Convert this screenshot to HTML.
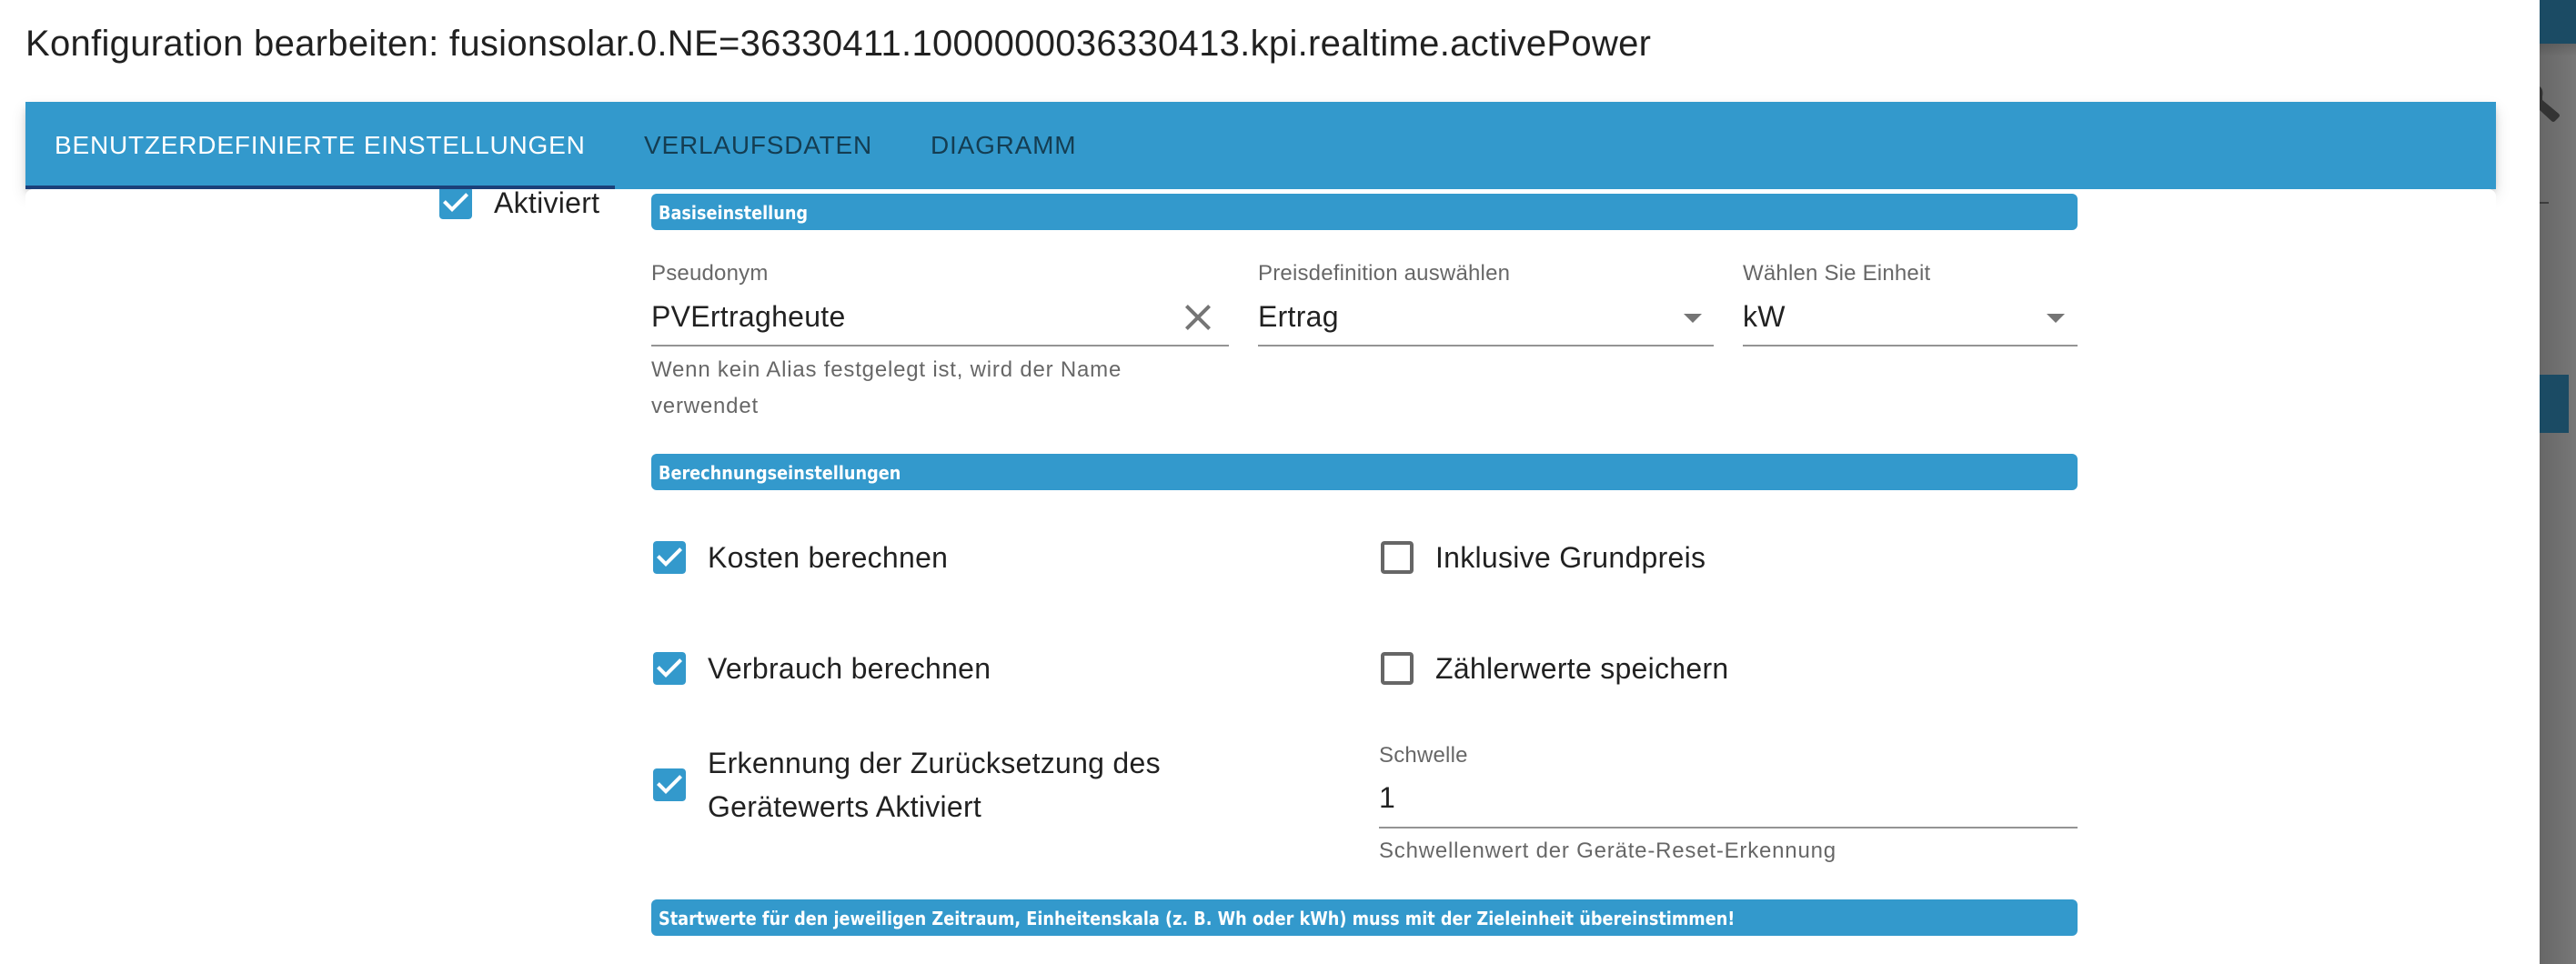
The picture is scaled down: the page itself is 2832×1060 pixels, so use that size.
<!DOCTYPE html>
<html lang="de">
<head>
<meta charset="utf-8">
<title>Konfiguration bearbeiten</title>
<style>
html,body{margin:0;padding:0;background:#fff;width:2832px;height:1060px;overflow:hidden}
body{position:relative;font-family:"Liberation Sans",Arial,sans-serif;color:rgba(0,0,0,.87)}
.t{position:absolute;line-height:1;white-space:nowrap}
.title{font-size:40px;letter-spacing:.3px}
.tab{font-size:28px;letter-spacing:.8px;color:rgba(0,0,0,.6)}
.lbl{font-size:24px;letter-spacing:.2px;color:rgba(0,0,0,.6)}
.help{font-size:24px;letter-spacing:.8px;color:rgba(0,0,0,.6)}
.val{font-size:32px;letter-spacing:.28px}
.line{position:absolute;height:2px;background:#949494}
.sec{position:absolute;left:716px;width:1568px;height:40px;background:#3399cc;border-radius:6px}
.sec span{position:absolute;left:8px;font:bold 20px/1 "DejaVu Sans",Verdana,sans-serif;color:#fff;white-space:nowrap;transform:scaleX(.884);transform-origin:0 0}
svg{position:absolute;display:block}
#strip{position:absolute;left:2792px;top:0;width:40px;height:1060px;overflow:hidden;background:linear-gradient(90deg,#676767,#777)}
#shadow{position:absolute;left:28px;top:112px;width:2716px;height:96px;z-index:1;box-shadow:0 4px 8px -2px rgba(0,0,0,.2),0 8px 16px 0 rgba(0,0,0,.12)}
#bar{position:absolute;left:28px;top:112px;width:2716px;height:96px;background:#3399cc;z-index:3}
#panel{position:absolute;left:28px;top:208px;width:2716px;height:852px;background:#fff;border-radius:8px 8px 0 0;z-index:2}
#ind{position:absolute;left:0;top:92px;width:648px;height:4px;background:#1b4079}
#content{position:absolute;left:0;top:0;width:2832px;height:1060px;z-index:2}
</style>
</head>
<body>

<div id="strip">
  <div style="position:absolute;left:0;top:0;width:40px;height:48px;background:#1b4b64"></div>
  <div style="position:absolute;left:0;top:48px;width:40px;height:14px;background:linear-gradient(180deg,rgba(0,0,0,.14),rgba(0,0,0,0))"></div>
  <svg style="left:0;top:0" width="40" height="240" viewBox="2792 0 40 240">
    <path fill="#333" d="M2792 95C2795 97 2796 101 2795 106V110L2813 125Q2815 127 2813 129L2809 133Q2807 135 2805 133L2792 121Z"/>
    <rect x="2792" y="222" width="10" height="2" fill="#3c3c3c"/>
  </svg>
  <div style="position:absolute;left:0;top:412px;width:32px;height:64px;background:#1b4b64"></div>
</div>

<div class="t title" style="left:28px;top:28px">Konfiguration bearbeiten: fusionsolar.0.NE=36330411.1000000036330413.kpi.realtime.activePower</div>

<div id="shadow"></div>
<div id="bar">
  <div id="ind"></div>
  <div class="t tab" style="left:32px;top:34px;color:#fff">BENUTZERDEFINIERTE EINSTELLUNGEN</div>
  <div class="t tab" style="left:680px;top:34px">VERLAUFSDATEN</div>
  <div class="t tab" style="left:995px;top:34px">DIAGRAMM</div>
</div>

<div id="panel"></div>

<div id="content">
  <svg style="left:477px;top:199px" width="48" height="48" viewBox="0 0 24 24"><path fill="#3399cc" d="M19 3H5c-1.11 0-2 .9-2 2v14c0 1.1.89 2 2 2h14c1.11 0 2-.9 2-2V5c0-1.1-.89-2-2-2zm-9 14l-5-5 1.41-1.41L10 14.17l7.59-7.59L19 8l-9 9z"/></svg>
  <div class="t val" style="left:543px;top:207px">Aktiviert</div>

  <div class="sec" style="top:213px"><span style="top:11px">Basiseinstellung</span></div>

  <div class="t lbl" style="left:716px;top:289px">Pseudonym</div>
  <div class="t val" style="left:716px;top:332px">PVErtragheute</div>
  <svg style="left:1293px;top:325px" width="48" height="48" viewBox="0 0 24 24"><path fill="#757575" d="M19 6.41L17.59 5 12 10.59 6.41 5 5 6.41 10.59 12 5 17.59 6.41 19 12 13.41 17.59 19 19 17.59 13.41 12z"/></svg>
  <div class="line" style="left:716px;top:379px;width:635px"></div>
  <div class="t help" style="left:716px;top:395px">Wenn kein Alias festgelegt ist, wird der Name</div>
  <div class="t help" style="left:716px;top:435px">verwendet</div>

  <div class="t lbl" style="left:1383px;top:289px">Preisdefinition auswählen</div>
  <div class="t val" style="left:1383px;top:332px">Ertrag</div>
  <svg style="left:1837px;top:325px" width="48" height="48" viewBox="0 0 24 24"><path fill="#757575" d="M7 10l5 5 5-5z"/></svg>
  <div class="line" style="left:1383px;top:379px;width:501px"></div>

  <div class="t lbl" style="left:1916px;top:289px">Wählen Sie Einheit</div>
  <div class="t val" style="left:1916px;top:332px">kW</div>
  <svg style="left:2236px;top:325px" width="48" height="48" viewBox="0 0 24 24"><path fill="#757575" d="M7 10l5 5 5-5z"/></svg>
  <div class="line" style="left:1916px;top:379px;width:368px"></div>

  <div class="sec" style="top:499px"><span style="top:11px">Berechnungseinstellungen</span></div>

  <svg style="left:712px;top:589px" width="48" height="48" viewBox="0 0 24 24"><path fill="#3399cc" d="M19 3H5c-1.11 0-2 .9-2 2v14c0 1.1.89 2 2 2h14c1.11 0 2-.9 2-2V5c0-1.1-.89-2-2-2zm-9 14l-5-5 1.41-1.41L10 14.17l7.59-7.59L19 8l-9 9z"/></svg>
  <div class="t val" style="left:778px;top:597px">Kosten berechnen</div>

  <svg style="left:1512px;top:589px" width="48" height="48" viewBox="0 0 24 24"><path fill="#666" d="M19 5v14H5V5h14m0-2H5c-1.1 0-2 .9-2 2v14c0 1.1.9 2 2 2h14c1.1 0 2-.9 2-2V5c0-1.1-.9-2-2-2z"/></svg>
  <div class="t val" style="left:1578px;top:597px">Inklusive Grundpreis</div>

  <svg style="left:712px;top:711px" width="48" height="48" viewBox="0 0 24 24"><path fill="#3399cc" d="M19 3H5c-1.11 0-2 .9-2 2v14c0 1.1.89 2 2 2h14c1.11 0 2-.9 2-2V5c0-1.1-.89-2-2-2zm-9 14l-5-5 1.41-1.41L10 14.17l7.59-7.59L19 8l-9 9z"/></svg>
  <div class="t val" style="left:778px;top:719px">Verbrauch berechnen</div>

  <svg style="left:1512px;top:711px" width="48" height="48" viewBox="0 0 24 24"><path fill="#666" d="M19 5v14H5V5h14m0-2H5c-1.1 0-2 .9-2 2v14c0 1.1.9 2 2 2h14c1.1 0 2-.9 2-2V5c0-1.1-.9-2-2-2z"/></svg>
  <div class="t val" style="left:1578px;top:719px">Zählerwerte speichern</div>

  <svg style="left:712px;top:839px" width="48" height="48" viewBox="0 0 24 24"><path fill="#3399cc" d="M19 3H5c-1.11 0-2 .9-2 2v14c0 1.1.89 2 2 2h14c1.11 0 2-.9 2-2V5c0-1.1-.89-2-2-2zm-9 14l-5-5 1.41-1.41L10 14.17l7.59-7.59L19 8l-9 9z"/></svg>
  <div class="t val" style="left:778px;top:823px">Erkennung der Zurücksetzung des</div>
  <div class="t val" style="left:778px;top:871px">Gerätewerts Aktiviert</div>

  <div class="t lbl" style="left:1516px;top:819px">Schwelle</div>
  <div class="t val" style="left:1516px;top:861px">1</div>
  <div class="line" style="left:1516px;top:909px;width:768px"></div>
  <div class="t help" style="left:1516px;top:924px">Schwellenwert der Geräte-Reset-Erkennung</div>

  <div class="sec" style="top:989px"><span style="top:11px">Startwerte für den jeweiligen Zeitraum, Einheitenskala (z. B. Wh oder kWh) muss mit der Zieleinheit übereinstimmen!</span></div>
</div>
</body>
</html>
